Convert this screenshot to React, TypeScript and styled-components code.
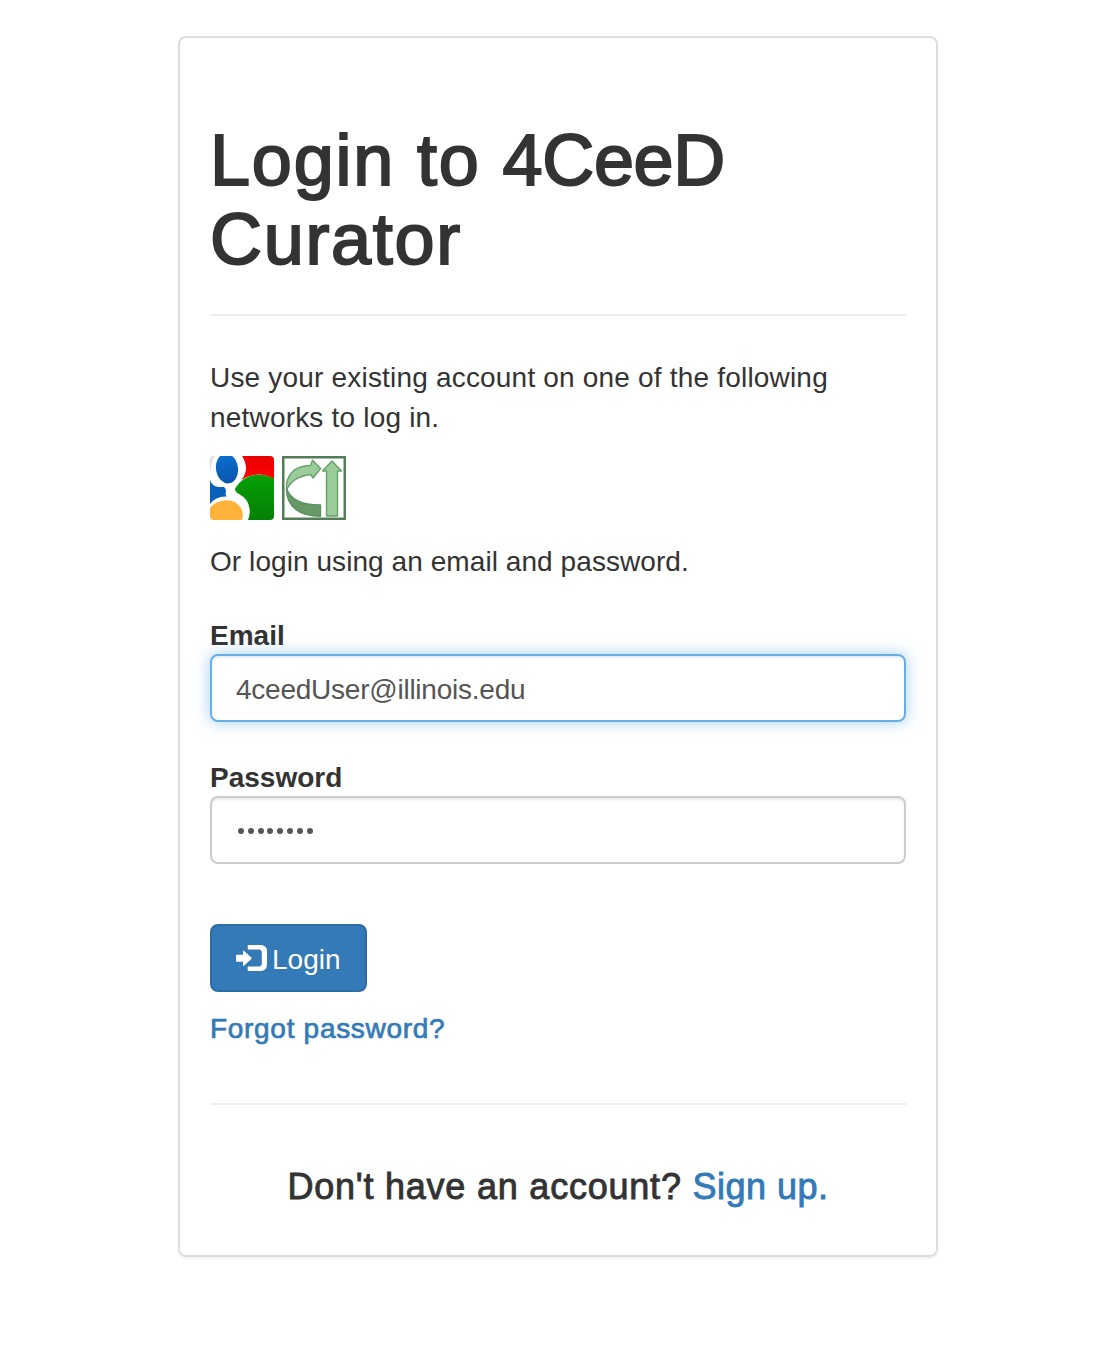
import React from "react";
import styled, { createGlobalStyle } from "styled-components";

const GlobalStyle = createGlobalStyle`
  * { box-sizing: border-box; }
  body {
    margin: 0;
    background: #fff;
    color: #333;
    font-family: "Liberation Sans", Arial, sans-serif;
    font-size: 28px;
    line-height: 40px;
  }
`;

const Page = styled.main`
  display: flex;
  justify-content: center;
  padding: 36px 0 91px 10px;
`;

const Card = styled.section`
  display: flex;
  flex-direction: column;
  width: 760px;
  height: 1221px;
  padding: 83px 30px 0;
  border: 2px solid #ddd;
  border-radius: 8px;
  box-shadow: 0 2px 2px rgba(0, 0, 0, 0.05);
`;

const Title = styled.h1`
  margin: 0 0 35px;
  font-size: 72px;
  line-height: 79.2px;
  font-weight: 400;
  -webkit-text-stroke: 2px #333;
`;

const Word = styled.span<{ $spacing: number }>`
  letter-spacing: ${(p) => p.$spacing}px;
`;

const Rule = styled.hr`
  width: 100%;
  margin: 0;
  border: 0;
  border-top: 2px solid #eee;
`;

const Text = styled.p<{ $spacing: number; $top: number }>`
  margin: ${(p) => p.$top}px 0 0;
  letter-spacing: ${(p) => p.$spacing}px;
  white-space: nowrap;
`;

const Providers = styled.div`
  display: flex;
  gap: 8px;
  margin-top: 18px;
`;

const ProviderLink = styled.a`
  display: block;
  width: 64px;
  height: 64px;
  svg { display: block; }
`;

const Field = styled.div<{ $top: number }>`
  display: flex;
  flex-direction: column;
  margin-top: ${(p) => p.$top}px;
`;

const Label = styled.label`
  font-weight: 700;
  line-height: 36px;
`;

const Control = styled.div<{ $active?: boolean }>`
  display: flex;
  align-items: center;
  height: 68px;
  padding: 4px 24px 0;
  color: #555;
  letter-spacing: -0.24px;
  background: #fff;
  border: 2px solid ${(p) => (p.$active ? "#66afe9" : "#ccc")};
  border-radius: 8px;
  box-shadow: inset 0 2px 2px rgba(0, 0, 0, 0.075)
    ${(p) => (p.$active ? ", 0 0 16px rgba(102, 175, 233, 0.6)" : "")};
`;

const Dots = styled.div`
  display: flex;
  gap: 3.8px;
  margin: -2px 0 0 2px;
`;

const Dot = styled.span`
  width: 6px;
  height: 6px;
  border-radius: 50%;
  background: #555;
`;

const LoginButton = styled.button`
  display: flex;
  align-items: center;
  width: 157px;
  height: 68px;
  margin: 60px 0 0;
  padding: 4px 0 0 24px;
  color: #fff;
  background: #337ab7;
  border: 2px solid #2e6da4;
  border-radius: 8px;
  font: 28px/40px "Liberation Sans", Arial, sans-serif;
  svg { margin: -4px 5px 0 0; flex: none; }
`;

const ForgotLink = styled.a`
  align-self: flex-start;
  margin: 17px 0 54px;
  color: #337ab7;
  letter-spacing: 0.7px;
  -webkit-text-stroke: 0.7px #337ab7;
`;

const Footer = styled.h4`
  margin: 62px 0 0;
  text-align: center;
  font-size: 36px;
  font-weight: 400;
  line-height: 40px;
  letter-spacing: 0.78px;
  white-space: nowrap;
  -webkit-text-stroke: 0.9px currentColor;
`;

const SignUp = styled.a`
  color: #337ab7;
  letter-spacing: 0.5px;
  -webkit-text-stroke: 0.9px #337ab7;
`;

const GoogleIcon = () => (
  <svg width="64" height="64" viewBox="0 0 64 64">
    <defs>
      <linearGradient id="blue" x1="0" y1="0" x2="0" y2="1">
        <stop offset="0" stopColor="#0b6fd0" />
        <stop offset="1" stopColor="#0757ab" />
      </linearGradient>
      <linearGradient id="red" x1="0" y1="0" x2="0" y2="1">
        <stop offset="0" stopColor="#e80000" />
        <stop offset="1" stopColor="#ff0505" />
      </linearGradient>
      <linearGradient id="green" x1="0" y1="0" x2="0" y2="1">
        <stop offset="0" stopColor="#079f07" />
        <stop offset="1" stopColor="#048004" />
      </linearGradient>
      <clipPath id="tile"><rect width="64" height="64" rx="4" /></clipPath>
    </defs>
    <g clipPath="url(#tile)">
      <rect width="64" height="64" fill="#fff" />
      <path d="M0 0H5Q0 6 0 22Z" fill="#ddd" />
      <path d="M32 0H64V23Q56 18.500 48 18.500Q39 19 31 24Q36.500 18 36 11Q35 4 32 0Z" fill="url(#red)" />
      <path d="M25 32.500Q34 18.700 48 18.700Q57 18.700 64 22.500V64H38Q42 54 37 45Q34 40.500 29 38Q25 36 25 32.500Z" fill="url(#green)" />
      <ellipse cx="17" cy="12.500" rx="11" ry="15" transform="rotate(-8 17 12.500)" fill="url(#blue)" />
      <path d="M0 24Q2 30 8 31H14Q17 34 15.500 38L16.500 40.500Q6 40 0 48Z" fill="#0860bb" />
      <path d="M0 52Q6 44.500 17 44.200Q26 44.500 31 52Q34 58 32 64H0Z" fill="#ffb33b" />
    </g>
  </svg>
);

const CILogonIcon = () => (
  <svg width="64" height="64" viewBox="0 0 64 64">
    <rect x="1.25" y="1.25" width="61.5" height="61.5" fill="#fff" stroke="#537d57" strokeWidth="2.5" />
    <g stroke="#67a06a" strokeWidth="1.4" strokeLinejoin="round">
      <path d="M4.500 32C8 44 20 49 38.500 49V60.300C18 60.300 4.500 51 4.500 33Z" fill="#669966" stroke="#5a925d" />
      <path d="M4.500 34.500C3 19 13 9.500 28.500 9.500L30.500 4.300L38.700 12.500L31 22L28.500 18.500C17 20 8 25 4.500 34.500Z" fill="#99cc99" />
      <path d="M50 5L59.500 15H55.500V60H44.500V15H40.500Z" fill="#99cc99" />
    </g>
  </svg>
);

const LoginIcon = () => (
  <svg width="31" height="26" viewBox="0 0 31 26" fill="#fff">
    <path d="M0.7 9.7H7V6.3Q7 5 8 6L15.3 12.6Q16 13.3 15.3 14L8 20.7Q7 21.5 7 20.3V16.8H0.7Q0 16.8 0 16.1V10.4Q0 9.7 0.7 9.7Z" />
    <path d="M12.5 0H24.5Q31 0 31 6.5V19.5Q31 26 24.5 26H12.5Q11.7 26 11.7 25.2V22.3Q11.7 21.5 12.5 21.5H22.8Q25.8 21.5 25.8 18.5V7.5Q25.8 4.5 22.8 4.5H12.5Q11.7 4.5 11.7 3.7V0.8Q11.7 0 12.5 0Z" />
  </svg>
);

export default function App() {
  return (
    <>
      <GlobalStyle />
      <Page>
        <Card>
          <Title>
            <Word $spacing={1.8}>Login to </Word>
            <Word $spacing={-0.3}>4CeeD</Word>
            <br />
            <Word $spacing={1.7}>Curator</Word>
          </Title>
          <Rule />
          <Text $top={42} $spacing={0.19}>
            Use your existing account on one of the following<br />networks to log in.
          </Text>
          <Providers>
            <ProviderLink aria-label="Google"><GoogleIcon /></ProviderLink>
            <ProviderLink aria-label="CILogon"><CILogonIcon /></ProviderLink>
          </Providers>
          <Text $top={22} $spacing={0.07}>Or login using an email and password.</Text>
          <Field $top={36}>
            <Label>Email</Label>
            <Control $active>4ceedUser@illinois.edu</Control>
          </Field>
          <Field $top={38}>
            <Label>Password</Label>
            <Control>
              <Dots>{Array.from({ length: 8 }, (_, i) => <Dot key={i} />)}</Dots>
            </Control>
          </Field>
          <LoginButton type="button"><LoginIcon />Login</LoginButton>
          <ForgotLink>Forgot password?</ForgotLink>
          <Rule />
          <Footer>Don't have an account? <SignUp>Sign up.</SignUp></Footer>
        </Card>
      </Page>
    </>
  );
}
